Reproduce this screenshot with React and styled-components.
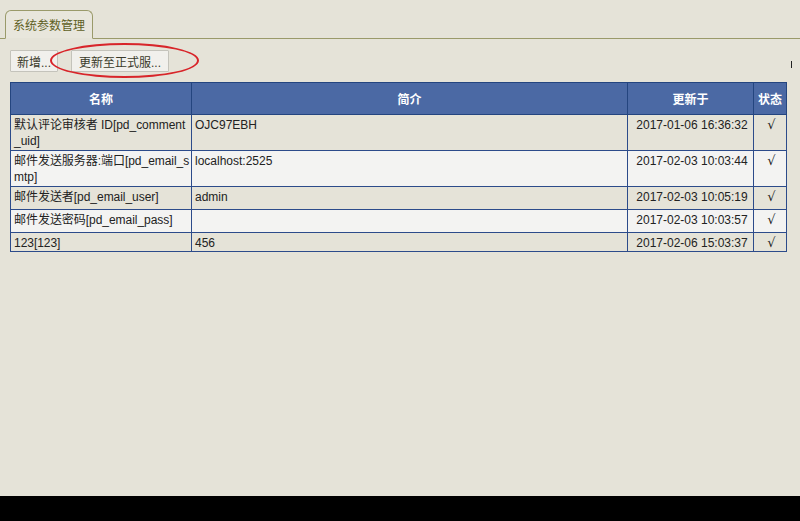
import React from "react";
import styled, { createGlobalStyle } from "styled-components";

const GlobalStyle = createGlobalStyle`
	html, body {
		margin: 0;
		padding: 0;
		background: #e5e3d8;
		font-family: "Liberation Sans", Arial, "Noto Sans CJK SC", sans-serif;
		font-size: 12px;
		color: #222;
	}
`;

const Page = styled.div`
	min-height: 100vh;
	display: flex;
	flex-direction: column;
`;

const Content = styled.div`
	flex: 1;
`;

const TabBar = styled.div`
	height: 28px;
	padding: 10px 0 0 5px;
	border-bottom: 1px solid #9a9a6a;
	display: flex;
	align-items: flex-end;
`;

const Tab = styled.div`
	height: 27px;
	padding: 0 7px;
	display: flex;
	align-items: center;
	color: #5f5f24;
	border: 1px solid #9a9a6a;
	border-bottom: 1px solid #e5e3d8;
	border-radius: 6px 6px 0 0;
	margin-bottom: -1px;
	background: #e8e6dc;
`;

const Toolbar = styled.div`
	position: relative;
	display: flex;
	align-items: center;
	gap: 13px;
	padding: 11px 8px 0 10px;
	height: 22px;
`;

const Button = styled.button`
	height: 22px;
	padding: 0 ${(props) => props.pad || 6}px;
	font: inherit;
	color: #3a3a2a;
	background: #f1f0ec;
	border: 1px solid #c4c3bb;
	border-radius: 1px;
`;

const Marker = styled.span`
	margin-left: auto;
	width: 1px;
	height: 7px;
	margin-top: 6px;
	background: #222;
`;

const Circle = styled.div`
	position: absolute;
	left: 50px;
	top: 4px;
	width: 145px;
	height: 31px;
	border: 2px solid #d8252a;
	border-radius: 50%;
	pointer-events: none;
`;

const Table = styled.table`
	margin: 10px 0 0 10px;
	width: 776px;
	border-collapse: collapse;
	table-layout: fixed;
`;

const HeadCell = styled.th`
	height: 31px;
	background: #4b69a4;
	color: #fff;
	font-weight: bold;
	border: 1px solid #24457f;
	text-align: center;
	padding: 0;
`;

const Row = styled.tr`
	background: ${(props) => (props.alt ? "#f3f3f2" : "#e5e3d8")};
`;

const Cell = styled.td`
	border: 1px solid #2c4b8a;
	vertical-align: top;
	padding: 2px 0 0 3px;
	line-height: 16px;
	height: ${(props) => props.h}px;
	text-align: ${(props) => (props.center ? "center" : "left")};
	letter-spacing: ${(props) => (props.tight ? "-0.04px" : "normal")};
	word-break: break-all;
	box-sizing: border-box;
`;

const Check = styled.span`
	font-family: "DejaVu Sans", sans-serif;
	font-size: 13px;
`;

const Footer = styled.div`
	height: 25px;
	background: #000;
`;

const rows = [
	["默认评论审核者 ID[pd_comment_uid]", "OJC97EBH", "2017-01-06 16:36:32", 36],
	["邮件发送服务器:端口[pd_email_smtp]", "localhost:2525", "2017-02-03 10:03:44", 36],
	["邮件发送者[pd_email_user]", "admin", "2017-02-03 10:05:19", 23],
	["邮件发送密码[pd_email_pass]", "", "2017-02-03 10:03:57", 23],
	["123[123]", "456", "2017-02-06 15:03:37", 18],
];

const App = () => {
	return (
		<Page>
			<GlobalStyle />
			<Content>
				<TabBar>
					<Tab>系统参数管理</Tab>
				</TabBar>
				<Toolbar>
					<Button pad={6}>新增...</Button>
					<Button pad={7}>更新至正式服...</Button>
					<Marker />
					<Circle />
				</Toolbar>
				<Table>
					<colgroup>
						<col style={{ width: 181 }} />
						<col style={{ width: 436 }} />
						<col style={{ width: 126 }} />
						<col style={{ width: 33 }} />
					</colgroup>
					<thead>
						<tr>
							<HeadCell>名称</HeadCell>
							<HeadCell>简介</HeadCell>
							<HeadCell>更新于</HeadCell>
							<HeadCell>状态</HeadCell>
						</tr>
					</thead>
					<tbody>
						{rows.map(([name, desc, date, h], i) => (
							<Row key={i} alt={i % 2 === 1}>
								<Cell h={h} tight>
									{name}
								</Cell>
								<Cell h={h}>{desc}</Cell>
								<Cell h={h} center>
									{date}
								</Cell>
								<Cell h={h} center>
									<Check>√</Check>
								</Cell>
							</Row>
						))}
					</tbody>
				</Table>
			</Content>
			<Footer />
		</Page>
	);
};

export default App;
